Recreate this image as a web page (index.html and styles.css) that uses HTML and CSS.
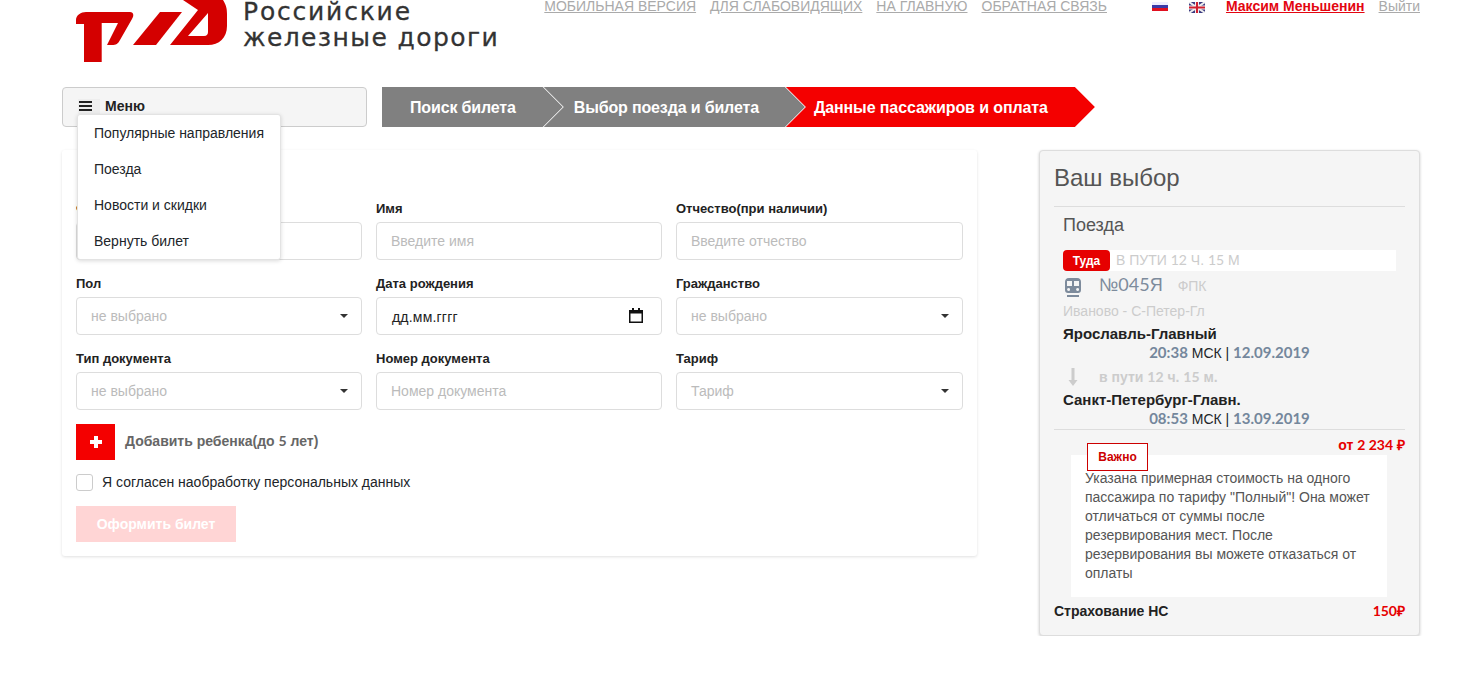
FILE: index.html
```html
<!DOCTYPE html>
<html>
<head>
    <title>Данные пассажиров и оплата</title>
    <link rel="stylesheet" href="styles.css">
</head>
<body>
    <div class="page">
        <div class="header">
            <div class="logo">
                <svg class="logo-mark" width="160" height="63" viewBox="0 0 160 63">
                    <path fill="#d40000" d="M0 20C0 15 5 12 10 12H54C58 12 58 16 56 19L44 40C42 44 40 45 36 45H31L42 23H25.7V62H8V24H0Z"/>
                    <path fill="#d40000" d="M57 45H80L106 12H84Z"/>
                    <path fill="#d40000" fill-rule="evenodd" d="M107 0H147C150 5 151 8 151 14V26C151 38 143 45 132 45H94L122 10ZM112 36H128C131 36 132 34 132 32V13Z"/>
                </svg>
                <div class="logo-text">
                    <span class="logo-line1">Российские</span>
                    <span class="logo-line2">железные дороги</span>
                </div>
            </div>
            <div class="top-nav">
                <a href="#">МОБИЛЬНАЯ ВЕРСИЯ</a>
                <a href="#">ДЛЯ СЛАБОВИДЯЩИХ</a>
                <a href="#">НА ГЛАВНУЮ</a>
                <a href="#">ОБРАТНАЯ СВЯЗЬ</a>
                <svg class="flag flag-ru" width="16" height="9" viewBox="0 0 16 9">
                    <rect width="16" height="3" fill="#eef"/>
                    <rect y="3" width="16" height="3" fill="#3a3aa8"/>
                    <rect y="6" width="16" height="3" fill="#e01020"/>
                </svg>
                <svg class="flag" width="16" height="11" viewBox="0 0 16 11">
                    <rect width="16" height="11" fill="#3a3a80"/>
                    <path d="M0 0L16 11M16 0L0 11" stroke="#eee" stroke-width="2"/>
                    <path d="M8 0V11M0 5.5H16" stroke="#eee" stroke-width="4"/>
                    <path d="M8 0V11M0 5.5H16" stroke="#d02030" stroke-width="2"/>
                </svg>
                <a href="#" class="user">Максим Меньшенин</a>
                <a href="#" class="logout">Выйти</a>
            </div>
        </div>

        <div class="toolbar">
            <div class="menu-wrap">
                <div class="menu-btn">
                    <span class="burger"><i></i><i></i><i></i></span>
                    <b>Меню</b>
                </div>
                <ul class="menu-list">
                    <li>Популярные направления</li>
                    <li>Поезда</li>
                    <li>Новости и скидки</li>
                    <li>Вернуть билет</li>
                </ul>
            </div>
            <div class="steps">
                <div class="step step-first">Поиск билета</div>
                <div class="step">Выбор поезда и билета</div>
                <div class="step step-active">Данные пассажиров и оплата</div>
            </div>
        </div>

        <div class="content">
            <div class="form-card">
                <div class="form-grid">
                    <div class="field">
                        <label>Фамилия</label>
                        <input type="text" placeholder="Введите фамилию">
                    </div>
                    <div class="field">
                        <label>Имя</label>
                        <input type="text" placeholder="Введите имя">
                    </div>
                    <div class="field">
                        <label>Отчество(при наличии)</label>
                        <input type="text" placeholder="Введите отчество">
                    </div>
                    <div class="field">
                        <label>Пол</label>
                        <div class="select">не выбрано</div>
                    </div>
                    <div class="field">
                        <label>Дата рождения</label>
                        <div class="date">
                            дд.мм.гггг
                            <svg width="14" height="15" viewBox="0 0 14 15">
                                <path fill="#111" d="M3 0H5V2H9V0H11V2H14V15H0V2H3ZM1.5 5.5V13.5H12.5V5.5Z"/>
                            </svg>
                        </div>
                    </div>
                    <div class="field">
                        <label>Гражданство</label>
                        <div class="select">не выбрано</div>
                    </div>
                    <div class="field">
                        <label>Тип документа</label>
                        <div class="select">не выбрано</div>
                    </div>
                    <div class="field">
                        <label>Номер документа</label>
                        <input type="text" placeholder="Номер документа">
                    </div>
                    <div class="field">
                        <label>Тариф</label>
                        <div class="select">Тариф</div>
                    </div>
                </div>
                <div class="add-child">
                    <span class="add-btn"></span>
                    <b>Добавить ребенка(до <span class="num">5</span> лет)</b>
                </div>
                <div class="agree">
                    <span class="check"></span>
                    <span class="agree-text">Я согласен наобработку персональных данных</span>
                </div>
                <div class="submit">Оформить билет</div>
            </div>

            <div class="side">
                <h2>Ваш выбор</h2>
                <div class="trains">
                    <h3>Поезда</h3>
                    <div class="way">
                        <span class="way-tag">Туда</span>
                        <span class="way-text">В ПУТИ <span class="num">12</span> Ч. <span class="num">15</span> М</span>
                    </div>
                    <div class="train-row">
                        <svg width="18" height="20" viewBox="0 0 18 20">
                            <path fill="#7d8b9c" d="M5 0H13C16 0 17 2 17 4V12C17 14 16 15 14 15H4C2 15 1 14 1 12V4C1 2 2 0 5 0ZM3 3V8H8V3ZM10 3V8H15V3ZM4.5 10A1.5 1.5 0 1 0 4.6 13A1.5 1.5 0 0 0 4.5 10ZM13.5 10A1.5 1.5 0 1 0 13.6 13A1.5 1.5 0 0 0 13.5 10ZM3 17H15V19H3Z"/>
                        </svg>
                        <span class="train-no">№<span class="num">045</span>Я</span>
                        <span class="carrier">ФПК</span>
                    </div>
                    <div class="route">Иваново - С-Петер-Гл</div>
                    <div class="station">Ярославль-Главный</div>
                    <div class="when"><b class="num">20:38</b> МСК | <b class="num">12.09.2019</b></div>
                    <div class="duration">
                        <svg width="10" height="18" viewBox="0 0 10 18">
                            <path fill="#ccc" d="M3.5 0H6.500V12H9.500L5 18L0.500 12H3.500Z"/>
                        </svg>
                        <span>в пути <span class="num">12</span> ч. <span class="num">15</span> м.</span>
                    </div>
                    <div class="station">Санкт-Петербург-Главн.</div>
                    <div class="when"><b class="num">08:53</b> МСК | <b class="num">13.09.2019</b></div>
                </div>
                <div class="price">от <span class="num">2 234</span> ₽</div>
                <div class="notice">
                    <span class="notice-tag">Важно</span>
                    <p>Указана примерная стоимость на одного пассажира по тарифу "Полный"! Она может отличаться от суммы после резервирования мест. После резервирования вы можете отказаться от оплаты</p>
                </div>
                <div class="insurance">
                    <b>Страхование НС</b>
                    <b class="red"><span class="num">150</span>₽</b>
                </div>
            </div>
        </div>
    </div>
</body>
</html>
```

FILE: styles.css
```css
* { box-sizing: border-box; }
body { margin: 0; font-family: "Liberation Sans", Arial, sans-serif; font-size: 14px; color: #212529; background: #fff; overflow: hidden; }
.page { padding: 0 44px 0 62px; }
.num { font-family: Lato, sans-serif; }

.header { display: flex; justify-content: space-between; height: 87px; padding-left: 14px; }
.logo { display: flex; align-items: flex-start; }
.logo-mark { display: block; flex: none; overflow: visible; }
.logo-text { margin-left: 7px; font-family: "DejaVu Sans", sans-serif; font-size: 25px; letter-spacing: 1.4px; color: #333; -webkit-text-stroke: 0.3px #333; white-space: nowrap; }
.logo-line1 { display: block; line-height: 23px; letter-spacing: 1.8px; }
.logo-line2 { display: block; line-height: 26px; margin-top: 2px; }
.top-nav { display: flex; align-items: flex-start; }
.top-nav a { font-size: 14px; color: #aaa; margin-left: 14px; line-height: 13px; }
.top-nav .user { color: #e30611; font-weight: bold; margin-left: 21px; }
.flag { margin-top: 2px; margin-left: 21px; }
.flag-ru { margin-left: 45px; }

.toolbar { display: flex; }
.menu-wrap { position: relative; width: 305px; margin-right: 15px; }
.menu-btn { height: 40px; background: #f5f5f5; border: 1px solid #ccc; border-radius: 4px; display: flex; align-items: center; padding: 0 0 2px 15px; }
.menu-btn b { margin-left: 5px; color: #222; }
.burger { width: 22px; height: 15px; padding: 2px 1px 0 1px; background: #eee; display: block; }
.burger i { display: block; width: 13px; height: 2px; background: #222; margin-bottom: 2px; }
.menu-list { position: absolute; left: 15px; top: 27px; z-index: 5; width: 204px; margin: 0; padding: 0; list-style: none; background: #fff; border: 1px solid #e3e3e3; border-radius: 3px; box-shadow: 0 1px 4px rgba(0,0,0,0.15); }
.menu-list li { height: 36px; line-height: 36px; padding-left: 16px; }

.steps { display: flex; }
.step { height: 40px; line-height: 41px; padding: 0 46px 0 30px; margin-left: -19px; background: #808080; color: #fff; font-weight: bold; font-size: 16px; letter-spacing: -0.15px; clip-path: polygon(0 0, calc(100% - 20px) 0, 100% 50%, calc(100% - 20px) 100%, 0 100%, 20px 50%); }
.step-first { margin-left: 0; padding: 0 47px 0 28px; clip-path: polygon(0 0, calc(100% - 20px) 0, 100% 50%, calc(100% - 20px) 100%, 0 100%); }
.step-active { background: #f40000; padding: 0 47px 0 28px; letter-spacing: -0.1px; }

.content { display: flex; align-items: flex-start; margin-top: 23px; }
.form-card { width: 915px; height: 406px; padding: 51px 14px 0; border-radius: 3px; box-shadow: 0 1px 3px rgba(0,0,0,0.12); }
.form-grid { display: grid; grid-template-columns: 286px 286px 287px; column-gap: 14px; row-gap: 16px; }
.field label { display: block; height: 21px; font-size: 13px; font-weight: bold; color: #222; }
.field input, .select, .date { display: flex; align-items: center; width: 100%; height: 38px; padding: 0 14px; border: 1px solid #ddd; border-radius: 4px; background: #fff; font-family: "Liberation Sans", sans-serif; font-size: 14px; color: #bbb; }
.field input::placeholder { color: #bbb; }
.select { position: relative; }
.select::after { content: ""; position: absolute; right: 13px; top: 16px; border: 4px solid transparent; border-top-color: #333; border-bottom: 0; }
.date { justify-content: space-between; color: #222; padding: 2px 18px 0 15px; letter-spacing: 0.2px; }
.date svg { margin-top: -3px; }

.add-child { display: flex; align-items: center; margin-top: 14px; color: #666; }
.add-child b { padding-bottom: 3px; }
.add-btn { width: 39px; height: 36px; background: #f40000; position: relative; margin-right: 10px; }
.add-btn::before, .add-btn::after { content: ""; position: absolute; background: #fff; }
.add-btn::before { left: 14px; top: 16px; width: 12px; height: 4px; }
.add-btn::after { left: 18px; top: 12px; width: 4px; height: 12px; }
.agree { display: flex; align-items: center; margin-top: 14px; height: 17px; }
.agree-text { margin-top: -2px; }
.check { width: 17px; height: 17px; margin-right: 9px; border: 1px solid #ccc; border-radius: 3px; }
.submit { width: 160px; height: 36px; line-height: 36px; margin-top: 15px; text-align: center; background: #ffd5d5; color: #fff; font-weight: bold; }

.side { width: 381px; height: 486px; margin-left: 62px; padding: 0 14px; background: #f5f5f5; border: 1px solid #ddd; border-radius: 4px; box-shadow: 0 1px 3px rgba(0,0,0,0.2); }
.side h2 { margin: 0; height: 56px; padding-top: 12px; font-size: 24px; line-height: 30px; font-weight: normal; color: #555; border-bottom: 1px solid #ddd; }
.trains { padding: 7px 9px 0; height: 223px; border-bottom: 1px solid #ddd; }
.trains h3 { margin: 0; font-size: 18px; line-height: 22px; font-weight: normal; color: #555; }
.way { display: flex; align-items: center; height: 21px; margin-top: 14px; background: #fff; color: #ccc; }
.way-tag { width: 47px; height: 21px; line-height: 22px; margin-right: 6px; text-align: center; background: #e60000; color: #fff; border-radius: 4px; font-size: 12px; font-weight: bold; }
.way-text { padding-bottom: 2px; }
.train-row { display: flex; align-items: center; height: 29px; padding-left: 1px; color: #ccc; }
.train-row svg { margin-top: 5px; }
.train-no { margin-left: 17px; padding-bottom: 2px; font-size: 18px; color: #7d8b9c; }
.carrier { margin-left: 15px; font-size: 14px; }
.route { color: #ccc; line-height: 18px; margin-top: 2px; }
.station { font-size: 15px; font-weight: bold; line-height: 18px; margin-top: 5px; color: #222; }
.when { text-align: center; font-size: 14px; line-height: 19px; }
.when b { font-size: 15px; color: #74879c; }
.duration { display: flex; align-items: center; height: 19px; margin-top: 4px; padding-left: 5px; color: #ccc; font-size: 14px; font-weight: bold; }
.duration svg { margin-right: 21px; }
.price { height: 15px; margin-top: 7px; text-align: right; color: #e60000; font-weight: bold; line-height: 15px; }
.notice { position: relative; width: 316px; height: 142px; margin: 3px 0 0 17px; padding: 14px 14px 0; background: #fff; }
.notice-tag { position: absolute; left: 16px; top: -12px; width: 61px; height: 28px; line-height: 26px; text-align: center; background: #fff; border: 1px solid #c00; color: #c00; font-size: 12px; font-weight: bold; }
.notice p { margin: 0; line-height: 19px; color: #555; }
.insurance { display: flex; justify-content: space-between; margin-top: 6px; line-height: 17px; color: #222; }
.red { color: #e60000; margin-top: -1px; }
```
